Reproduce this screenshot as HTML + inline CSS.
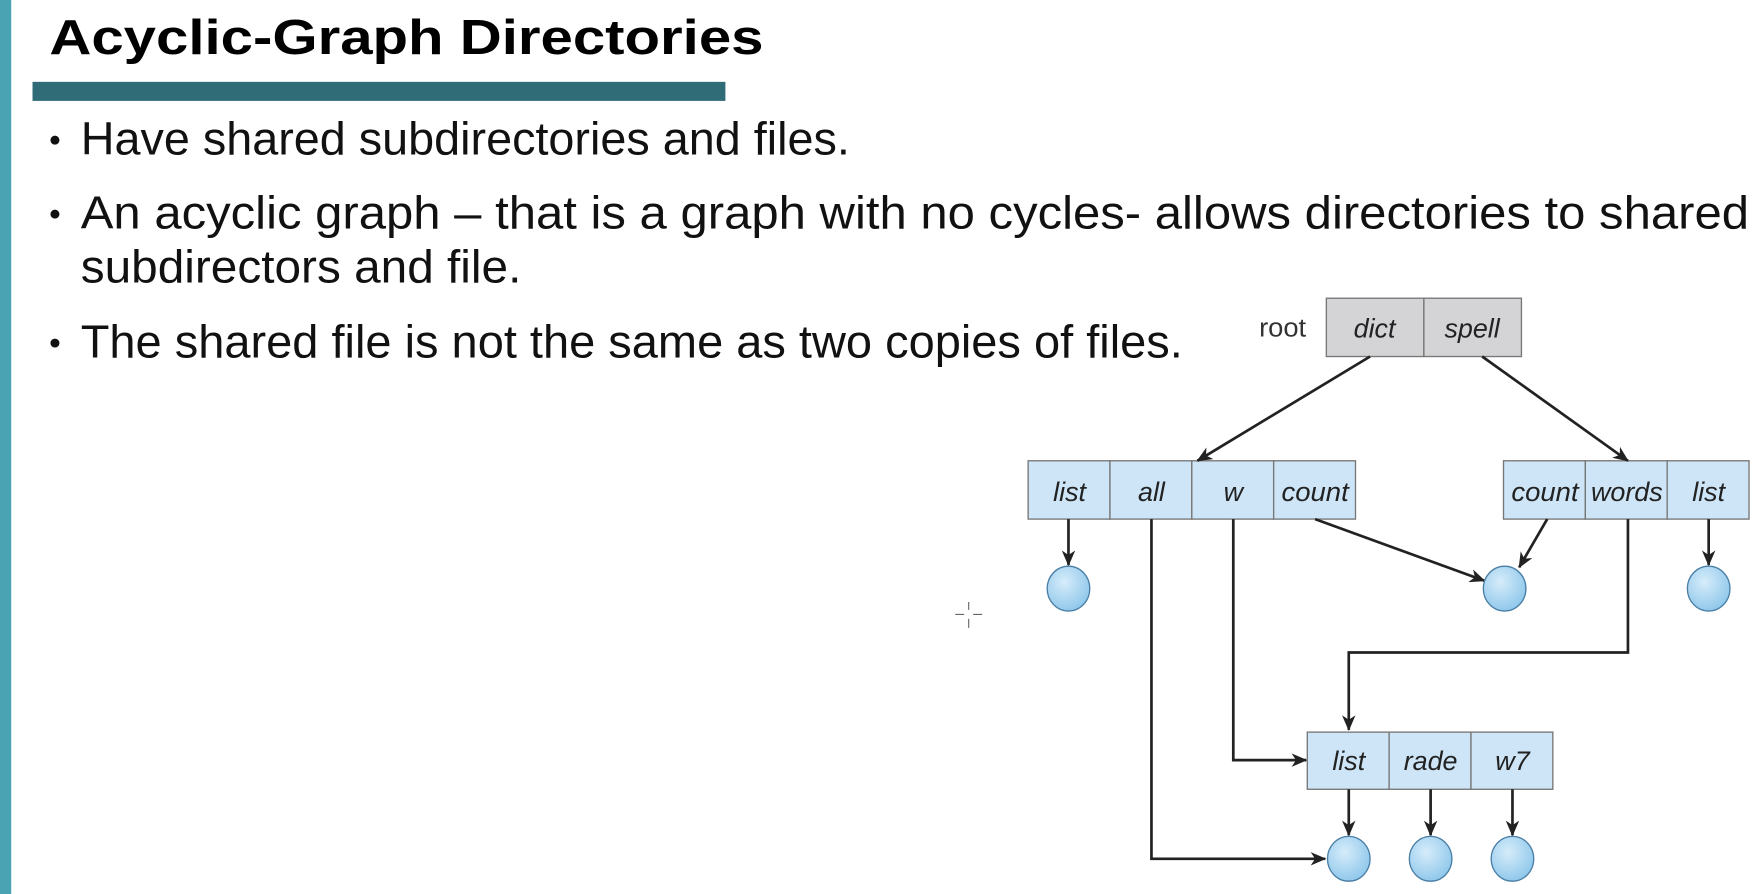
<!DOCTYPE html>
<html><head><meta charset="utf-8"><style>
html,body{margin:0;padding:0;background:#fff;width:1758px;height:894px;overflow:hidden}
svg{display:block}
text{font-family:"Liberation Sans",sans-serif}
</style></head><body>
<svg width="1758" height="894" viewBox="0 0 1568 797.4" preserveAspectRatio="none" xmlns="http://www.w3.org/2000/svg">
<defs><marker id="a" markerWidth="14" markerHeight="12" refX="13" refY="6" orient="auto" markerUnits="userSpaceOnUse"><path d="M0,0 L14,6 L0,12 L4,6 z" fill="#222"/></marker>
<radialGradient id="g" cx="0.4" cy="0.35" r="0.7"><stop offset="0" stop-color="#d6ecfa"/><stop offset="1" stop-color="#8cc6ea"/></radialGradient></defs>
<rect x="0" y="0" width="10" height="797.4" fill="#4aa3b3"/>
<text x="44" y="48" font-size="44" font-weight="bold" textLength="637" lengthAdjust="spacingAndGlyphs" fill="#000">Acyclic-Graph Directories</text>
<rect x="29" y="73" width="618" height="17" fill="#2f6c77"/>
<g font-size="41" fill="#111">
<circle cx="49" cy="125" r="4" fill="#111"/><text x="72" y="138" textLength="686" lengthAdjust="spacingAndGlyphs">Have shared subdirectories and files.</text>
<circle cx="49" cy="191" r="4" fill="#111"/><text x="72" y="204" textLength="1488" lengthAdjust="spacingAndGlyphs">An acyclic graph – that is a graph with no cycles- allows directories to shared</text>
<text x="72" y="252" textLength="393" lengthAdjust="spacingAndGlyphs">subdirectors and file.</text>
<circle cx="49" cy="306" r="4" fill="#111"/><text x="72" y="319" textLength="983" lengthAdjust="spacingAndGlyphs">The shared file is not the same as two copies of files.</text>
</g>
<text x="1123" y="300" font-size="23" fill="#333" textLength="42" lengthAdjust="spacingAndGlyphs">root</text>
<g stroke="#777" stroke-width="1.2">
<rect x="1183" y="266" width="87" height="52" fill="#d4d4d6"/><rect x="1270" y="266" width="87" height="52" fill="#d4d4d6"/>
<rect x="917" y="411" width="73" height="52" fill="#cde5f6"/><rect x="990" y="411" width="73" height="52" fill="#cde5f6"/><rect x="1063" y="411" width="73" height="52" fill="#cde5f6"/><rect x="1136" y="411" width="73" height="52" fill="#cde5f6"/>
<rect x="1341" y="411" width="73" height="52" fill="#cde5f6"/><rect x="1414" y="411" width="73" height="52" fill="#cde5f6"/><rect x="1487" y="411" width="73" height="52" fill="#cde5f6"/>
<rect x="1166" y="653" width="73" height="51" fill="#cde5f6"/><rect x="1239" y="653" width="73" height="51" fill="#cde5f6"/><rect x="1312" y="653" width="73" height="51" fill="#cde5f6"/>
</g>
<g font-size="24" font-style="italic" fill="#222" text-anchor="middle">
<text x="1226" y="301">dict</text><text x="1313" y="301">spell</text>
<text x="954" y="447">list</text><text x="1027" y="447">all</text><text x="1100" y="447">w</text><text x="1173" y="447" textLength="60" lengthAdjust="spacingAndGlyphs">count</text>
<text x="1378" y="447" textLength="60" lengthAdjust="spacingAndGlyphs">count</text><text x="1451" y="447" textLength="64" lengthAdjust="spacingAndGlyphs">words</text><text x="1524" y="447">list</text>
<text x="1203" y="687">list</text><text x="1276" y="687">rade</text><text x="1349" y="687">w7</text>
</g>
<g stroke="#222" stroke-width="2.4" fill="none" marker-end="url(#a)">
<path d="M1222,318 L1068,411"/><path d="M1322,318 L1452,411"/>
<path d="M953,463 L953,504"/><path d="M1173,463 L1324,518"/><path d="M1380,463 L1355,506"/><path d="M1524,463 L1524,504"/>
<path d="M1452,463 L1452,582 L1203,582 L1203,651"/>
<path d="M1100,463 L1100,678 L1165,678"/>
<path d="M1027,463 L1027,766 L1182,766"/>
<path d="M1203,704 L1203,745"/><path d="M1276,704 L1276,745"/><path d="M1349,704 L1349,745"/>
</g>
<g fill="url(#g)" stroke="#4a7fa6" stroke-width="1.2">
<ellipse cx="953" cy="525" rx="19" ry="20"/><ellipse cx="1342" cy="525" rx="19" ry="20"/><ellipse cx="1524" cy="525" rx="19" ry="20"/>
<ellipse cx="1203" cy="766" rx="19" ry="20"/><ellipse cx="1276" cy="766" rx="19" ry="20"/><ellipse cx="1349" cy="766" rx="19" ry="20"/>
</g>
<g stroke="#666" stroke-width="1"><path d="M864,537 v7 M864,552 v8 M852,548 h8 M868,548 h8"/></g>
</svg>
</body></html>
